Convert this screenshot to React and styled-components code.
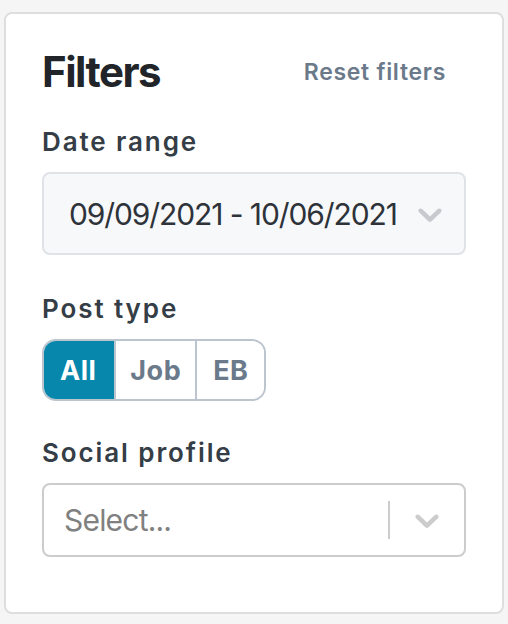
import styled, { createGlobalStyle } from "styled-components";
import { useState } from "react";

const GlobalStyle = createGlobalStyle`
  html, body {
    margin: 0;
    padding: 0;
    background: #f5f5f5;
  }
  body {
    font-family: Inter, "Open Sans", sans-serif;
    -webkit-font-smoothing: antialiased;
  }
`;

const Page = styled.div`
  padding: 12px 4px 10px 4px;
`;

const Card = styled.div`
  background: #fff;
  border: 2px solid #dedede;
  border-radius: 8px;
  padding: 30px 36px 55px 36px;
`;

const Header = styled.div`
  display: flex;
  align-items: center;
  justify-content: space-between;
  margin-bottom: 26px;
`;

const Title = styled.h2`
  margin: 0;
  font-size: 42px;
  line-height: 56px;
  font-weight: 700;
  color: #212529;
  letter-spacing: -1.5px;
`;

const ResetButton = styled.button`
  background: none;
  border: none;
  padding: 0;
  margin-right: 20px;
  font-family: inherit;
  font-size: 23px;
  font-weight: 600;
  letter-spacing: 0.7px;
  color: #6b7a8b;
  cursor: pointer;
`;

const Field = styled.div`
  display: flex;
  flex-direction: column;
  gap: 14px;
  & + & {
    margin-top: 38px;
  }
  & + & + & {
    margin-top: 36px;
  }
`;

const Label = styled.div`
  font-size: 26px;
  line-height: 32px;
  font-weight: 600;
  letter-spacing: 1.9px;
  color: #353d46;
`;

const DateBox = styled.div`
  height: 83px;
  box-sizing: border-box;
  display: flex;
  align-items: center;
  justify-content: space-between;
  padding: 0 14px 0 25px;
  background: #f7f8fa;
  border: 2px solid #dfe2e6;
  border-radius: 8px;
  font-size: 30px;
  color: #2d3339;
  white-space: nowrap;
  letter-spacing: -1.1px;
`;

const Segmented = styled.div`
  display: inline-flex;
  align-self: flex-start;
  height: 62px;
  box-sizing: border-box;
  border: 2px solid #bcc5ce;
  border-radius: 14px;
  overflow: hidden;
`;

const Segment = styled.button`
  font-family: inherit;
  font-size: 27px;
  font-weight: 700;
  letter-spacing: 0.5px;
  border: none;
  margin: -2px 0;
  padding: 0 ${(p) => p.$pad}px;
  background: ${(p) => (p.$active ? "#0787ab" : "#fff")};
  color: ${(p) => (p.$active ? "#fff" : "#6b7a8b")};
  cursor: pointer;
  &:first-child {
    margin-left: -2px;
  }
  & + & {
    border-left: 2px solid #bcc5ce;
  }
`;

const SelectBox = styled.div`
  height: 74px;
  box-sizing: border-box;
  display: flex;
  align-items: center;
  background: #fff;
  border: 2px solid #cccccc;
  border-radius: 8px;
  padding-left: 20px;
`;

const Placeholder = styled.div`
  flex: 1;
  font-size: 30px;
  letter-spacing: -0.8px;
  color: #808080;
`;

const Separator = styled.span`
  width: 2px;
  align-self: stretch;
  margin: 16px 0;
  background: #cccccc;
`;

const Indicator = styled.div`
  width: ${(p) => (p.$fit ? "auto" : "74px")};
  display: flex;
  justify-content: center;
  align-items: center;
  color: ${(p) => p.$color || "#cccccc"};
`;

const Chevron = ({ size = 40 }) => (
  <svg width={size} height={size} viewBox="0 0 20 20" fill="currentColor">
    <path d="M4.516 7.548c0.436-0.446 1.043-0.481 1.576 0l3.908 3.747 3.908-3.747c0.533-0.481 1.141-0.446 1.574 0 0.436 0.445 0.408 1.197 0 1.615-0.406 0.418-4.695 4.502-4.695 4.502-0.217 0.223-0.502 0.335-0.787 0.335s-0.57-0.112-0.789-0.335c0 0-4.287-4.084-4.695-4.502s-0.436-1.17 0-1.615z" />
  </svg>
);

const postTypes = [
  { key: "all", label: "All", pad: 18 },
  { key: "job", label: "Job", pad: 14 },
  { key: "eb", label: "EB", pad: 16 },
];

const App = () => {
  const [postType, setPostType] = useState("all");

  return (
    <Page>
      <GlobalStyle />
      <Card>
        <Header>
          <Title>Filters</Title>
          <ResetButton>Reset filters</ResetButton>
        </Header>

        <Field>
          <Label>Date range</Label>
          <DateBox>
            <span>09/09/2021 - 10/06/2021</span>
            <Indicator $fit $color="#c6cace">
              <Chevron />
            </Indicator>
          </DateBox>
        </Field>

        <Field>
          <Label>Post type</Label>
          <Segmented>
            {postTypes.map((t) => (
              <Segment
                key={t.key}
                $pad={t.pad}
                $active={postType === t.key}
                onClick={() => setPostType(t.key)}
              >
                {t.label}
              </Segment>
            ))}
          </Segmented>
        </Field>

        <Field>
          <Label>Social profile</Label>
          <SelectBox>
            <Placeholder>Select...</Placeholder>
            <Separator />
            <Indicator>
              <Chevron />
            </Indicator>
          </SelectBox>
        </Field>
      </Card>
    </Page>
  );
};

export default App;
